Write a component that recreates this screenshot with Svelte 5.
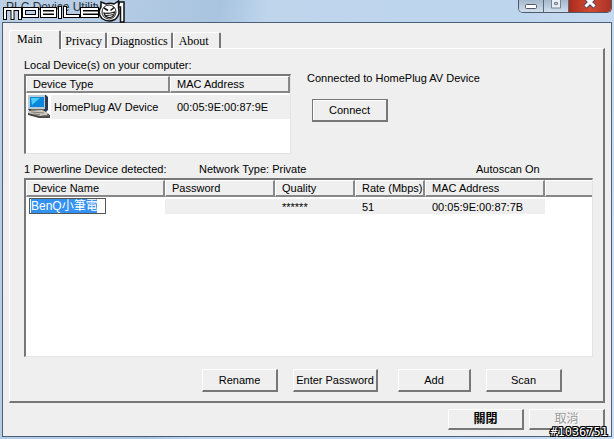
<script>
  let selectedTab = $state('Main');
  const tabs = ['Main', 'Privacy', 'Diagnostics', 'About'];
  let deviceName = $state('BenQ小筆電');
</script>

<div class="window">
  <header class="titlebar">
    <span class="title">PLC Device Utility</span>
    <div class="controls">
      <button aria-label="Minimize"><svg width="14" height="12"><rect x="1.5" y="4.500" width="11" height="4" rx="1" fill="#fff" stroke="#535666" /></svg></button>
      <button aria-label="Maximize" disabled><svg width="14" height="12"><path d="M2.500-1h9v9h-9z M5.500 2.500h3v2h-3z" fill="#e8eef4" fill-rule="evenodd" stroke="#7b8494" /></svg></button>
      <button class="close" aria-label="Close"><svg width="14" height="12"><path d="M2-3L12 7M12-3L2 7" stroke="#54495a" stroke-width="5" /><path d="M2.500-2.500L11.500 6.500M11.500-2.500L2.500 6.500" stroke="#fff" stroke-width="3" /></svg></button>
    </div>
  </header>
  <svg class="brand" viewBox="0 0 130 24" aria-hidden="true">
    {#each [['#000', 4], ['#fff', 2]] as [color, width]}
      <path
        d="M5 18V9H20V18M12.500 9V18M24 9H37V16H24ZM42 9H55V16H42ZM42 12.500H55M60 8V17M65 8V16H78M97 9H82V16H97M82 12.500H97"
        fill="none" stroke={color} stroke-width={width} stroke-linecap="square" />
    {/each}
    <path d="M119.500 2H124V22H120.500V7H118Z" fill="#fff" stroke="#111" stroke-width="1.500" />
    <path d="M101 2L106 4Q110 2.500 114 4L118.500 1L118.500 8Q120.500 15 115 19.500Q108 23 102 18.500Q97 13 101 7Z" fill="#fff" stroke="#111" stroke-width="1.500" />
    <circle cx="109" cy="12" r="7" fill="#fff" stroke="#222" />
    <path d="M104 8L108 10.500M114 7.500L110.500 10.500" stroke="#111" stroke-width="1.500" />
    <path d="M104 13Q109 14 114.500 12Q114 17.500 109 17.500Q105 17 104 13Z" fill="#fff" stroke="#111" stroke-width="1.200" />
    <path d="M106 15.500Q110 15.500 113 14.500" fill="none" stroke="#222" />
  </svg>

  <main class="client">
    <div class="tabs" role="tablist">
      {#each tabs as tab}
        <button role="tab" class:active={selectedTab === tab} aria-selected={selectedTab === tab} onclick={() => (selectedTab = tab)}>{tab}</button>
      {/each}
    </div>
    <section class="panel">
      <div class="local">
        <div class="local-list">
          <p>Local Device(s) on your computer:</p>
          <div class="listbox short">
            <table>
              <colgroup><col class="type" /><col /></colgroup>
              <thead><tr><th>Device Type</th><th>MAC Address</th></tr></thead>
              <tbody><tr>
                <td><span class="device">
                  <svg width="24" height="24" viewBox="0 0 24 24" aria-hidden="true">
                    <path d="M1 0H19L21 2V15L19 17H3L1 14Z" fill="#2d3a52" />
                    <path d="M1 0H18V14H1Z" fill="#b9cbd4" />
                    <path d="M3 2H17V12H3Z" fill="#0a86da" />
                    <path d="M4 3H13L5 10Z" fill="#4ccdf8" />
                    <path d="M4 14H17V16H4Z" fill="#6d6a68" />
                    <path d="M1 16L16 15L23 20V23H12L1 20Z" fill="#4b4549" />
                    <path d="M1 16L15 15L21 18L20 20L13 21L1 18Z" fill="#cfcabd" />
                    <path d="M4 17L17 18M6 19L13 19.500M15 21L22 20.500" stroke="#807a76" />
                  </svg>
                  <span class="label">HomePlug AV Device</span></span></td>
                <td class="shade">00:05:9E:00:87:9E</td>
              </tr></tbody>
            </table>
          </div>
        </div>
        <div class="connection">
          <p>Connected to HomePlug AV Device</p>
          <button class="push default">Connect</button>
        </div>
      </div>
      <div class="status"><span>1 Powerline Device detected:</span><span>Network Type: Private</span><span>Autoscan On</span></div>
      <div class="listbox devices">
        <table>
          <colgroup><col class="name" /><col class="password" /><col class="quality" /><col class="rate" /><col class="mac" /><col /></colgroup>
          <thead><tr><th>Device Name</th><th>Password</th><th>Quality</th><th>Rate (Mbps)</th><th>MAC Address</th><th aria-label="Empty"></th></tr></thead>
          <tbody><tr>
            <td class="edit"><span class="editor"><input aria-label="Device Name" bind:value={deviceName} /></span></td>
            <td class="shade"></td><td class="shade">******</td><td class="shade">51</td><td class="shade">00:05:9E:00:87:7B</td><td></td>
          </tr></tbody>
        </table>
      </div>
      <div class="actions">
        <button class="push">Rename</button><button class="push wide">Enter Password</button><button class="push add">Add</button><button class="push">Scan</button>
      </div>
    </section>
    <footer><button class="push strong">關閉</button><button class="push" disabled>取消</button></footer>
  </main>
  <span class="stamp">#1036751</span>
</div>

<style>
  :global(body) { margin: 0; }
  * { box-sizing: border-box; }
  .window {
    position: relative; display: flex; flex-direction: column; min-height: 100vh; padding: 0 2px 2px;
    background: linear-gradient(100deg, #bdd1e6 0, #b2cae3 20%, #a9c4df 32%, #bed5ec 39%, #bdd5ed 75%, #cddff2 100%);
    color: #000; font: 11px/16px "Liberation Sans", "Noto Sans CJK TC", sans-serif;
  }
  button, input { font: inherit; color: inherit; }
  p { margin: 0; }
  .titlebar { height: 22px; display: flex; justify-content: space-between; align-items: flex-start; }
  .title { padding-left: 4px; font-size: 12px; line-height: 14px; color: #24313e; }
  .controls { display: flex; height: 13px; border: 1px solid #4f596a; border-top: 0; border-radius: 0 0 5px 5px; overflow: hidden; }
  .controls button { width: 25px; padding: 0; border: 0; border-right: 1px solid #59677b; background: linear-gradient(#a5b8cc, #d0dfed); line-height: 0; }
  .controls button.close { width: 42px; border: 0; background: linear-gradient(90deg, #a92b1d, #d44a32 50%, #a93226); }
  .brand { position: absolute; left: 0; top: 0; width: 130px; height: 24px; }
  .client { flex: 1; display: flex; flex-direction: column; background: #efefef; border: 1px solid #4b5f78; padding: 7px 6px 6px; }
  .tabs { display: flex; align-items: flex-end; height: 18px; font: 12px/16px "Liberation Serif", serif; }
  .tabs button { height: 16px; padding: 0 3px; border: solid; border-width: 1px 2px 0 1px; border-color: #fff #777 #fff #fff; border-radius: 2px 2px 0 0; background: #efefef; white-space: nowrap; }
  .tabs button.active { height: 19px; margin-bottom: -1px; padding: 0 17px 4px 7px; z-index: 1; }
  .tabs button:last-child { padding: 0 10px 0 5px; }
  .panel { flex: 1; display: flex; flex-direction: column; border: solid; border-width: 1px 2px 2px 1px; border-color: #fff #777 #777 #fff; padding: 8px 10px 9px 14px; }
  .local { display: flex; gap: 16px; }
  .local-list { width: 267px; }
  .listbox { background: #fff; border: solid; border-width: 2px 1px 1px 2px; border-color: #777 #e3e3e3 #e3e3e3 #777; }
  .short { height: 80px; margin-top: 1px; }
  table { width: 100%; table-layout: fixed; border-collapse: separate; border-spacing: 0; }
  th { height: 17px; padding: 0 6px; border: solid; border-width: 1px 2px 2px 1px; border-color: #fff #888 #888 #fff; background: #efefef; font-weight: 400; text-align: left; line-height: 14px; white-space: nowrap; }
  .devices th:last-child { border-right: 0; }
  td { padding: 0 7px; white-space: nowrap; }
  .type { width: 144px; }
  .short td { height: 26px; padding-top: 2px; }
  .short td:first-child { padding-left: 1px; padding-right: 0; }
  .device { display: flex; height: 24px; align-items: center; }
  .device svg { flex: none; }
  .label { flex: 1; line-height: 24px; padding-left: 3px; background: #efefef; }
  .shade { background: linear-gradient(#fff 2px, #efefef 2px); }
  .connection { padding-top: 13px; }
  .push { width: 76px; height: 23px; padding: 0; border: solid; border-width: 1px 2px 2px 1px; border-color: #fff #777 #777 #fff; background: #efefef; white-space: nowrap; }
  .default { display: block; margin: 13px 0 0 5px; border-color: #777; box-shadow: inset 1px 1px #fff; }
  .status { display: grid; grid-template-columns: 175px 277px auto; margin-top: 7px; }
  .devices { flex: 1; margin-top: 1px; }
  .name { width: 139px; } .password { width: 110px; } .quality { width: 80px; } .rate { width: 70px; } .mac { width: 120px; }
  .devices td { height: 16px; padding-top: 2px; line-height: 14px; }
  .devices .edit { padding: 1px 0 0 3px; }
  .editor { display: flex; width: 77px; height: 16px; padding: 0 1px; border: 1px solid #555; background: #fff; }
  .editor input { width: 66px; height: 14px; border: 0; padding: 0; outline: 0; background: #3391f2; color: #fff; font-size: 12px; line-height: 14px; }
  .actions { display: flex; justify-content: flex-end; gap: 15px; padding: 12px 31px 0 0; }
  .wide { width: 85px; margin-right: 5px; } .add { width: 73px; }
  footer { display: flex; justify-content: flex-end; gap: 5px; padding-top: 6px; }
  footer .push { height: 21px; font-size: 12px; line-height: 16px; }
  .strong { font-weight: 700; }
  .push:disabled { color: #999; text-shadow: 1px 1px #fff; }
  .stamp { position: absolute; right: 6px; bottom: 0; color: #fff; font: 12px/14px "DejaVu Sans Mono", monospace; text-shadow: -1px 0 #000, 1px 0 #000, 0 -1px #000, 0 1px #000, 1px 1px #000, -1px -1px #000, 1px -1px #000, -1px 1px #000; }
</style>
